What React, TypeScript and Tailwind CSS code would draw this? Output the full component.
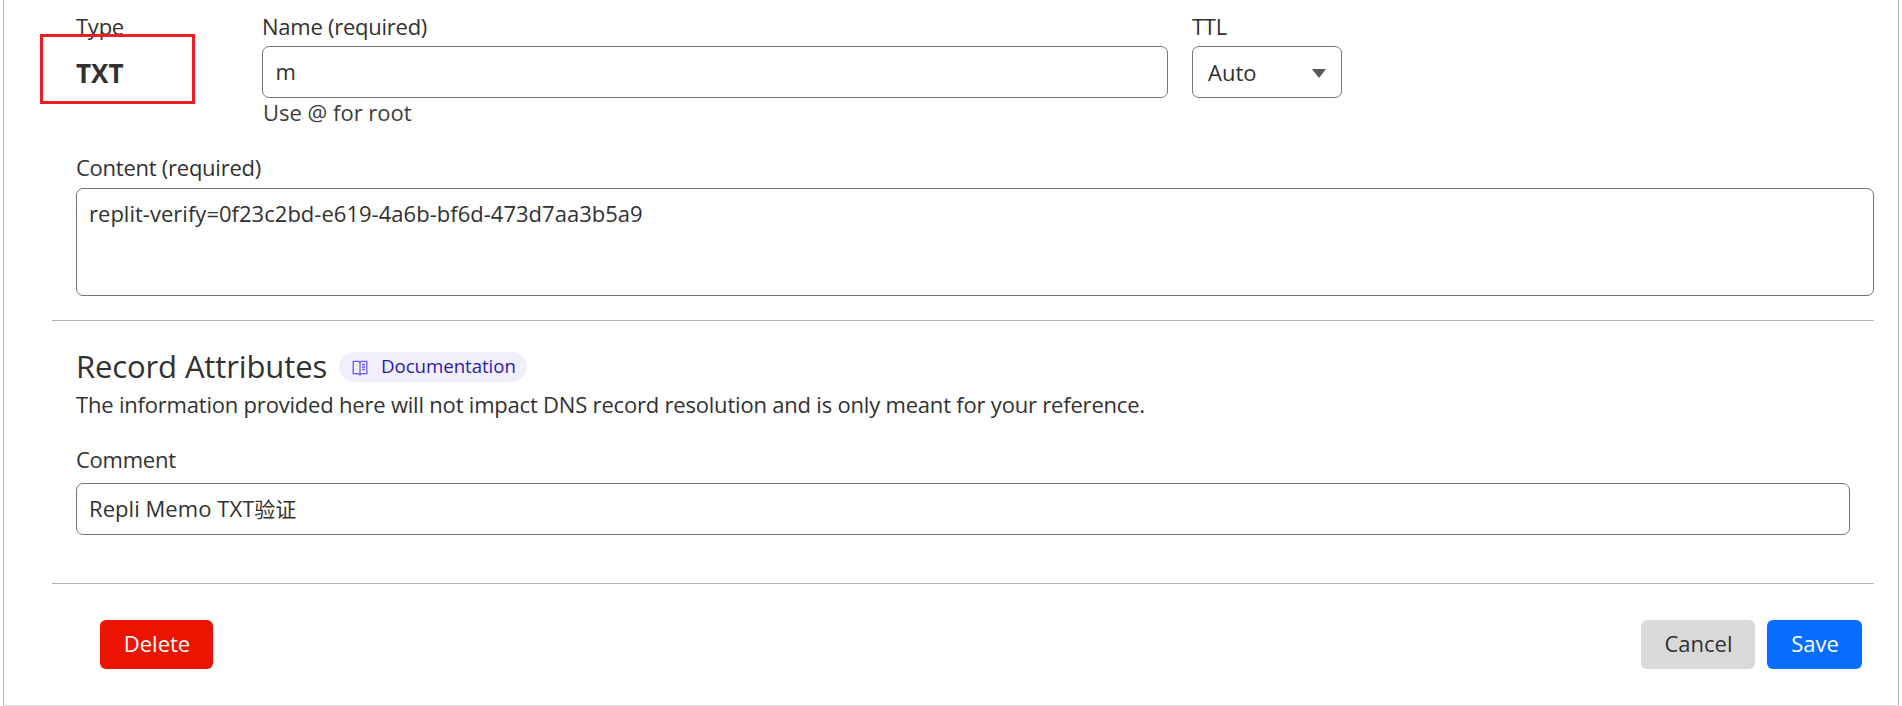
import React from "react";

function BookIcon() {
  return (
    <svg width="16" height="16" viewBox="0 0 16 16" fill="none" stroke="#6a5be6" strokeWidth="1.3">
      <path d="M8 2.6 6.6 1.4H1.2v12.2h5.2L8 15l1.6-1.4h5.2V1.4H9.4L8 2.6Z" />
      <path d="M8 2.6V15" />
      <path d="M10 4.5h3M10 7h3M10 9.5h3" />
    </svg>
  );
}

function Label({ children }: { children: React.ReactNode }) {
  return <label className="block h-[30px] leading-[30px] tracking-[-0.25px] whitespace-nowrap">{children}</label>;
}

export default function App() {
  return (
    <div className="h-[706px] w-full overflow-hidden bg-white pr-[3px] pl-[3px] font-['Open_Sans','Noto_Sans_CJK_SC',sans-serif] text-[22px] text-[#313131]">
      <div className="flex h-full flex-col border-r border-b border-l border-r-[#b3b3b3] border-b-[#d9d9d9] border-l-[#b3b3b3] pr-6 pl-12">
        <div className="flex h-[152px] pt-[11px] pl-6">
          <div className="relative w-[186px]">
            <Label>Type</Label>
            <div className="mt-3.5 text-[26px] leading-9 font-bold">TXT</div>
            <div className="absolute -left-9 top-[23px] h-[70px] w-[155px] border-3 border-[#ef1c24]" />
          </div>
          <div className="w-[906px]">
            <Label>Name (required)</Label>
            <input
              defaultValue="m"
              className="mt-[5px] block h-[52px] w-full rounded-[7px] border border-[#767676] pt-[9px] pr-3 pb-[11px] pl-[12.5px] leading-[30px] outline-none"
            />
            <div className="h-7 pl-px leading-7 text-[#3c3c3c]">Use @ for root</div>
          </div>
          <div className="ml-6 w-[150px]">
            <Label>TTL</Label>
            <div className="mt-[5px] flex h-[52px] items-center justify-between rounded-[7px] border border-[#767676] pr-[15px] pl-[15px]">
              <span className="leading-[30px]">Auto</span>
              <svg width="14" height="9" viewBox="0 0 14 9" className="mt-0.5">
                <path d="M0 0h14L7 9Z" fill="#595959" />
              </svg>
            </div>
          </div>
        </div>

        <div className="pl-6">
          <Label>Content (required)</Label>
          <textarea
            defaultValue="replit-verify=0f23c2bd-e619-4a6b-bf6d-473d7aa3b5a9"
            className="mt-1.5 block h-[108px] w-full resize-none rounded-[7px] border border-[#6f7380] px-3 py-[9px] leading-[30px] tracking-[0.02px] outline-none"
          />
        </div>

        <hr className="mt-6 border-t border-[#b3b3b3]" />

        <div className="mt-6 pr-6 pl-6">
          <div className="flex h-11 items-start">
            <h2 className="w-[263px] text-[31px] leading-[42px] tracking-[-0.12px] whitespace-nowrap">Record Attributes</h2>
            <a className="mt-[7px] flex h-[30px] w-[188px] rounded-full bg-[#f1effc] pl-[13px] text-[18.7px] text-[#2c1aa8]">
              <span className="mt-2">
                <BookIcon />
              </span>
              <span className="mt-px ml-[13px] leading-[25px] tracking-[-0.06px]">Documentation</span>
            </a>
          </div>
          <p className="leading-[30px] tracking-[-0.2px] whitespace-nowrap">
            The information provided here will not impact DNS record resolution and is only meant for your reference.
          </p>
          <div className="mt-[25px]">
            <Label>Comment</Label>
          </div>
          <div className="mt-[9px] flex h-[52px] rounded-[7px] border border-[#767676] px-3 pt-[9px] leading-[30px] tracking-[0.05px]">
            <span>Repli Memo TXT</span>
            <span className="font-['Noto_Sans_CJK_SC',sans-serif] text-[21px] tracking-normal">验证</span>
          </div>
        </div>

        <hr className="mt-12 border-t border-[#b3b3b3]" />

        <div className="mt-9 flex pr-3 pl-12">
          <button className="h-[49px] w-[113px] rounded-md bg-[#eb1400] pb-[3px] pl-px leading-[30px] text-white">Delete</button>
          <button className="ml-auto h-[49px] w-[114px] rounded-md bg-[#d9d9d9] pb-[3px] pl-px leading-[30px]">Cancel</button>
          <button className="ml-3 h-[49px] w-[95px] rounded-md bg-[#056dff] pb-[3px] pl-px leading-[30px] text-white">Save</button>
        </div>
      </div>
    </div>
  );
}
